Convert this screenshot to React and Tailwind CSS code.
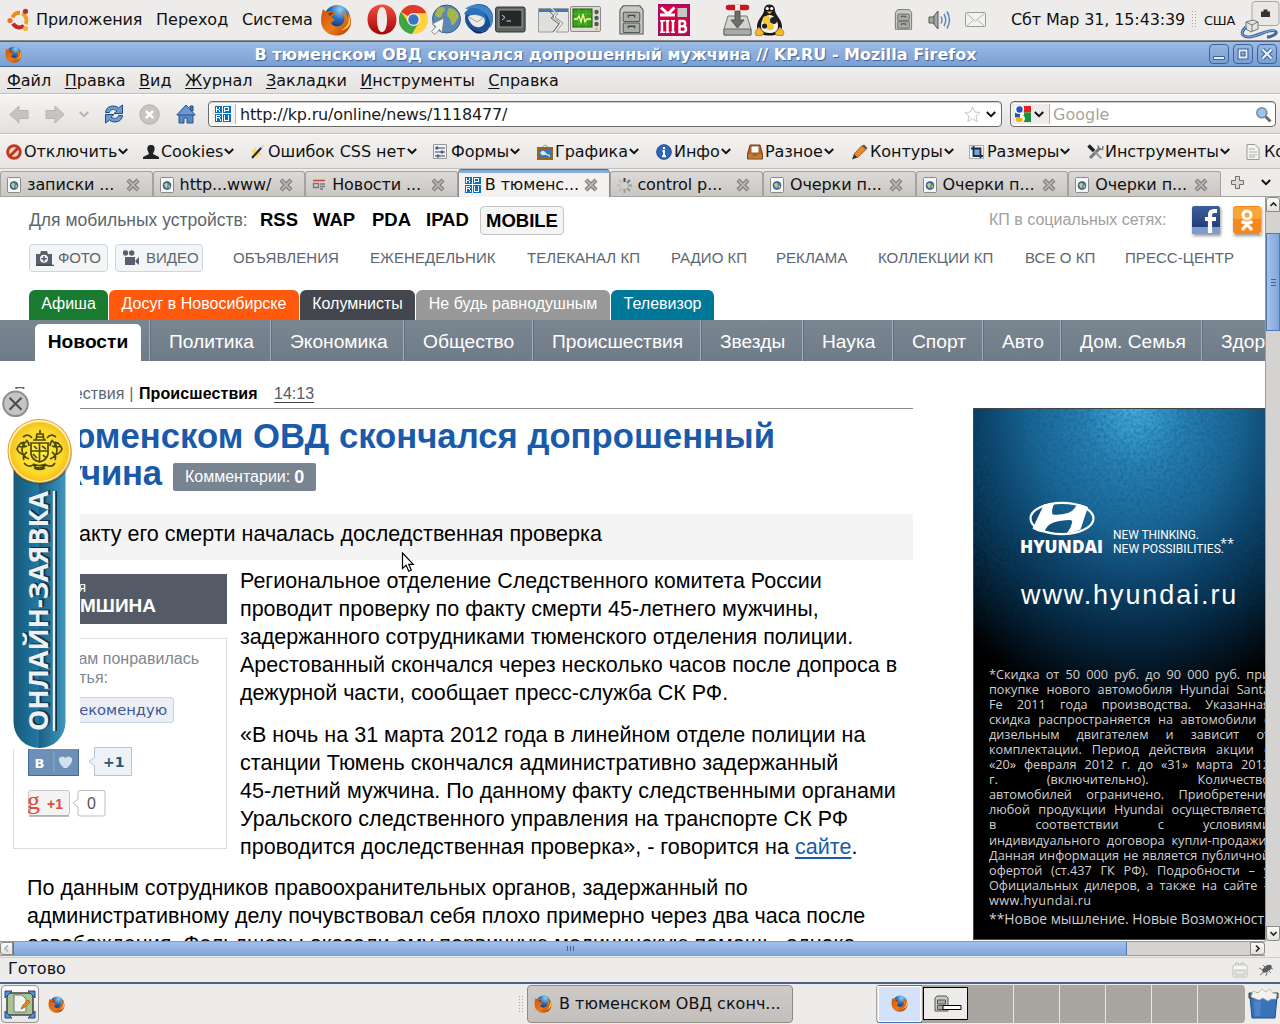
import React from "react";

/* ---------- shared icons ---------- */

const Firefox = ({ s = 32, className = "" }) => (
  <svg width={s} height={s} viewBox="0 0 32 32" className={`shrink-0 ${className}`}>
    <defs>
      <radialGradient id="ffg" cx="62%" cy="18%" r="75%">
        <stop offset="0" stopColor="#8fd3f5" />
        <stop offset=".5" stopColor="#2b6db8" />
        <stop offset="1" stopColor="#142d6b" />
      </radialGradient>
      <linearGradient id="ffo" x1="0" y1="0" x2="1" y2="1">
        <stop offset="0" stopColor="#c9520f" />
        <stop offset=".55" stopColor="#ee7a16" />
        <stop offset="1" stopColor="#a8380a" />
      </linearGradient>
    </defs>
    <circle cx="17" cy="14" r="13" fill="url(#ffg)" />
    <path d="M3 5c1.500 2 3 2.500 5 2.500 3-.5 6 0 7 1 1 1.800-3 2.500-3.500 4.500.5 1.500 3 1.500 3 3-1 2-2.800 1.500-3.500 3 2 4 7.500 4.500 11 1.500 4-4 3-9-1-14 5 2 6.500 5 7 8 .5-1.500.5-4-.5-6.500C31.500 13 32 18 30 23c-3 6.500-9 9-14.500 8.500C7 30.800 1 25 1 16c0-4 1-8 2-11z" fill="url(#ffo)" />
    <path d="M28.500 11c1 5 0 12-8 15.500 7-1 9.500-5 10-9z" fill="#fbd04a" />
    <path d="M8.500 9.500c1.500-.8 3-.8 5-.2-1 .8-3 1.500-4 3z" fill="#7a2c0a" />
  </svg>
);

const Chevron = ({ color = "#111", className = "" }) => (
  <svg width="10" height="7" viewBox="0 0 10 7" className={`shrink-0 ${className}`}>
    <path d="M.8 1 5 5.200 9.200 1" fill="none" stroke={color} strokeWidth="2" />
  </svg>
);

const CloseX = () => (
  <svg width="14" height="14" viewBox="0 0 14 14" className="shrink-0">
    <path d="M2 2 12 12M12 2 2 12" stroke="#7d7b78" strokeWidth="4.200" />
    <path d="M2.500 2.500 11.500 11.500M11.500 2.500 2.500 11.500" stroke="#b8b5b2" strokeWidth="1.800" />
  </svg>
);

const KpIcon = () => (
  <svg width="16" height="16" viewBox="0 0 16 16" className="shrink-0" shapeRendering="crispEdges">
    <rect width="16" height="16" fill="#0a70b8" />
    <path d="M7 0h1v16h-1zM0 7h16v1H0zM15 1h0v14h0z" fill="#fff" />
    <path d="M1 1h1v5H1zM2 3h2v1H2zM4 1h1v2H4zM4 4h1v2H4z" fill="#fff" />
    <path d="M9 1h1v5H9zM10 1h4v1h-4zM13 2h1v2h-1zM10 4h4v1h-4z" fill="#fff" />
    <path d="M1 9h1v6H1zM2 9h3v1H2zM5 10h1v1H5zM2 11h3v1H2zM4 12h1v1H4zM5 13h1v2H5z" fill="#fff" />
    <path d="M9 9h1v6H9zM13 9h1v6h-1zM10 14h3v1h-3z" fill="#fff" />
  </svg>
);

const GlobePage = () => (
  <svg width="14" height="16" viewBox="0 0 14 16" className="shrink-0">
    <rect x=".5" y=".5" width="13" height="15" rx="1" fill="#f6f6f4" stroke="#8a8a86" />
    <circle cx="7" cy="8.500" r="3.900" fill="#4a7ab0" stroke="#2b4d78" strokeWidth=".8" />
    <path d="M4.200 7.500c1-2 3-2 3.500-.5s-1 2-.5 3-1.500 1.500-2 0zM8.500 8.500c1-.5 2 0 1.500 1.500s-1.500 1-1.500 0z" fill="#c3d26a" />
  </svg>
);

const Cabinet = ({ w, h }) => (
  <svg width={w} height={h} viewBox="0 0 24 29" className="shrink-0">
    <path d="M4 .8h16l3.200 4V28H.8V4.800z" fill="#c9cac6" stroke="#555753" />
    <rect x="4" y="7" width="16" height="9" rx="1" fill="#a9aba5" stroke="#555753" />
    <rect x="4" y="17.500" width="16" height="9" rx="1" fill="#a9aba5" stroke="#555753" />
    <path d="M9 12v-2h6v2M9 22.500v-2h6v2" fill="none" stroke="#444" strokeWidth="1.300" />
  </svg>
);

/* ---------- desktop top panel ---------- */

const TopPanel = () => (
  <div className="flex h-10 items-center bg-[#edeceb] pl-[7px] pb-px">
    <svg width="23" height="24" viewBox="0 0 23 24">
      <g fill="none" strokeWidth="4">
        <path d="M5.500 9.500A7.300 7.300 0 0 1 13 4.800" stroke="#f28a1c" />
        <path d="M15 5.500A7.300 7.300 0 0 1 18.500 16" stroke="#f0a029" />
        <path d="M17 17.800A7.300 7.300 0 0 1 6 15.500" stroke="#c22b2b" />
      </g>
      <circle cx="3" cy="12.500" r="2.600" fill="#e8702a" />
      <circle cx="18.500" cy="3.300" r="2.600" fill="#b92b3b" />
      <circle cx="18.500" cy="20.500" r="2.600" fill="#f3b23c" />
    </svg>
    <span className="ml-1.5 w-[120px] tracking-[-0.1px]">Приложения</span>
    <span className="w-[86px]">Переход</span>
    <span className="w-[78px] tracking-[-0.1px]">Система</span>
    <Firefox s={32} />
    <svg width="30" height="31" viewBox="0 0 30 31" className="ml-[15px]">
      <defs><linearGradient id="op" x1="0" y1="0" x2="0" y2="1"><stop offset="0" stopColor="#f4503f" /><stop offset="1" stopColor="#a3040a" /></linearGradient></defs>
      <path fillRule="evenodd" d="M15 .5C23.500.5 29.500 7 29.500 15.500S23.500 30.500 15 30.500.5 24 .5 15.500 6.500.5 15 .5zM15 3c-3.500 0-5 6-5 12.500S11.500 28 15 28s5-6 5-12.500S18.500 3 15 3z" fill="url(#op)" />
    </svg>
    <svg width="29" height="29" viewBox="0 0 28 28" className="ml-0.5">
      <circle cx="14" cy="14" r="14" fill="#ffd23f" />
      <path d="M14 14 2 6.500A14 14 0 0 1 26.500 8H14z" fill="#dd3b2b" />
      <path d="M2 6.500A14 14 0 0 0 12.500 28L19 17 9 17z" fill="#3da542" />
      <circle cx="14" cy="14" r="6.300" fill="#f4f4f4" />
      <circle cx="14" cy="14" r="5" fill="#3a76c4" />
    </svg>
    <svg width="31" height="32" viewBox="0 0 31 32" className="ml-[3px]">
      <circle cx="15.500" cy="15" r="14" fill="#5b87b8" stroke="#385f8d" />
      <path d="M6 5c4-3 7-2 8 0s-3 3-3 6-4 4-7 0zM18 4c5 0 9 4 10 9-3 3-4 8-7 8-2-2 0-5-3-7s-2-8 0-10z" fill="#a3b64c" />
      <path d="M13 14 1 20l4 2.500-4.500 5 3.500 3 4.500-5L11 29z" fill="#f5f5f5" stroke="#777" strokeWidth=".8" />
    </svg>
    <svg width="31" height="31" viewBox="0 0 31 31" className="ml-px">
      <circle cx="16" cy="14" r="14" fill="#1e4f96" />
      <path d="M2 5C8-1 20-1 26 5c5 6 5 14 1 19 1-7-2-14-9-17-6-2-11-2-16-2z" fill="#3d86c9" />
      <path d="M1 10C6 1 18 3 22 11c2 5 1 7-2 10-5 2-11 1-14-4C4 15 5 12 6 11z" fill="#2e70b8" />
      <path d="M5 13c4-4 12-2 16 1 2 4 0 8-4 9-5 1-10-2-12-10z" fill="#eceae4" />
      <path d="M6 13l8 5 6-4" fill="none" stroke="#a9a59c" />
      <path d="M7 23c5 6 14 6 19 1-3 6-15 9-19-1z" fill="#0d2a5c" />
    </svg>
    <svg width="31" height="28" viewBox="0 0 31 28" className="ml-[1px]">
      <rect x=".6" y="1" width="29.500" height="25" rx="2" fill="#61645f" stroke="#2e3436" />
      <rect x="4" y="4" width="23" height="17" fill="#23282b" stroke="#9a9c98" />
      <path d="M7 9l3 2.500L7 14M11.500 15H16" stroke="#ddd" fill="none" />
    </svg>
    <svg width="31" height="26" viewBox="0 0 31 26" className="ml-3">
      <path d="M.5 1.500H13l5 5-4 3 8 6-7 9.500H.5z" fill="#dfe0de" stroke="#9a9c98" />
      <path d="M15 1.500h15.500V25H18l7-9-8-6 3-3z" fill="#e7e8e6" stroke="#9a9c98" />
      <path d="M1 2h12l3 3H1zM15.500 2H30v3H18.500z" fill="#4477b5" />
      <path d="M11 4l5 5-3 2 8 6-6 8" fill="none" stroke="#666" />
    </svg>
    <svg width="31" height="27" viewBox="0 0 31 27" className="ml-px">
      <rect x=".5" y=".5" width="30" height="25" rx="1.500" fill="#dcdcd6" stroke="#888a85" />
      <rect x="3" y="3" width="19" height="18" fill="#37a21a" stroke="#20560f" />
      <path d="M3 8h19M3 14h19M9 3v18M16 3v18" stroke="#5cc43a" strokeWidth=".6" />
      <path d="M4 13h3l2-3 2 6 2-8 2 8 2-3h4" fill="none" stroke="#fff9a0" strokeWidth="1.300" />
      <circle cx="26.500" cy="6" r="2.200" fill="#555753" /><circle cx="26.500" cy="12" r="2.200" fill="#555753" /><circle cx="26.500" cy="18" r="2.200" fill="#555753" /><circle cx="26.500" cy="23" r="1.300" fill="#e9b23a" />
    </svg>
    <span className="ml-[18px] flex"><Cabinet w={25} h={30} /></span>
    <svg width="32" height="32" viewBox="0 0 32 32" className="ml-[14px]">
      <rect width="32" height="32" fill="#d0043e" />
      <rect x=".8" y=".8" width="30.400" height="30.400" fill="none" stroke="#7a10a0" strokeWidth="1.600" strokeDasharray="1.500 1.500" />
      <path d="M2 11h15M10 10 3 3.500M10 10l6.500-6.500" stroke="#fff" strokeWidth="3" fill="none" />
      <rect x="19.500" y="4" width="9.500" height="9" fill="#c9c4c6" />
      <path d="M4 16v13M9.500 16v13M15 16v13" stroke="#fff" strokeWidth="2.400" />
      <path d="M2 16.800h5M7.500 16.800h4M13 16.800h4M2 28.200h5M7.500 28.200h4M13 28.200h4" stroke="#fff" strokeWidth="1.600" />
      <path d="M21.500 17v11h4q2.500-.3 2.500-3t-2.500-2.800h-4 3.500q2.200-.3 2.200-2.700T25 17z" fill="none" stroke="#fff" strokeWidth="2.400" />
    </svg>
    <svg width="29" height="32" viewBox="0 0 29 32" className="ml-[33px]">
      <path d="M5 12h19l4 13v6H1v-6z" fill="#d3d4d0" stroke="#777" />
      <path d="M1 25h27v6H1z" fill="#a9aba6" stroke="#666" />
      <path d="M12 7h5v9h4l-6.500 8L8 16h4z" fill="#6b6e69" stroke="#444" strokeWidth=".8" />
      <path d="M5.500 3.500h18" stroke="#c9171c" strokeWidth="5.500" strokeLinecap="round" /><path d="M12 3.500h5" stroke="#eee" strokeWidth="5.500" />
    </svg>
    <svg width="31" height="32" viewBox="0 0 31 32" className="ml-0.5">
      <path d="M15.500.5c4 0 5.500 3 5.500 6 0 4 7 9 7 16s-5 9-12.500 9S3 29.500 3 22.500s7-12 7-16c0-3 1.500-6 5.500-6z" fill="#1b1b1b" />
      <path d="M15.500 11c5 0 8.500 6 8.500 11s-3 7-8.500 7S7 27 7 22s3.500-11 8.500-11z" fill="#f4f2ec" />
      <circle cx="12.500" cy="16" r="4" fill="#f5c92f" /><circle cx="19.500" cy="16.500" r="3.500" fill="#222" /><circle cx="16" cy="22.500" r="3.800" fill="#f5c92f" /><circle cx="10.500" cy="22" r="2.600" fill="#222" />
      <circle cx="13.300" cy="4.500" r="1.600" fill="#fff" /><circle cx="17.700" cy="4.500" r="1.600" fill="#fff" /><path d="M12.500 7.500h6l-3 2.500z" fill="#eeb320" />
      <path d="M1 28l4-5 5 6-2 2.500H2zM30 28l-4-5-5 6 2 2.500h6z" fill="#f0b92a" stroke="#8a6410" strokeWidth=".6" />
    </svg>
    <span className="ml-[109px] flex"><Cabinet w={19} h={21} /></span>
    <svg width="23" height="20" viewBox="0 0 23 20" className="ml-[15px]">
      <path d="M1 7h4l5-6v18l-5-6H1z" fill="#a5a7a2" stroke="#555753" /><path d="M6 6v8" stroke="#555" />
      <path d="M13 6.500q2 3.500 0 7M16 4q3.500 6 0 12M19 1.500q5 8.500 0 17" fill="none" stroke="#5f86b4" strokeWidth="1.500" />
    </svg>
    <svg width="21" height="16" viewBox="0 0 21 16" className="ml-[14px]">
      <rect x=".5" y=".5" width="20" height="14" rx="1" fill="#f2f2f0" stroke="#9c9c98" /><path d="M1.500 1.500 10.500 9l9-7.500M1.500 14l7-6M19.500 14l-7-6" fill="none" stroke="#b5b5b1" />
    </svg>
    <span className="ml-[25px] w-[181px] whitespace-nowrap tracking-[-0.13px]">Сбт Мар 31, 15:43:39</span>
    <svg width="5" height="17" viewBox="0 0 5 17" shapeRendering="crispEdges"><path d="M.5 0v17M3.500 0v17" stroke="#aaa7a4" strokeDasharray="1 2" /></svg>
    <span className="ml-[7px] w-[36px] pt-px text-[13px] leading-none tracking-[-0.3px]">США</span>
    <svg width="40" height="40" viewBox="0 0 40 40" className="mt-px">
      <rect x="12" y="1.500" width="27" height="24" rx="3" fill="#e9e8e4" stroke="#a9a8a4" />
      <path d="M21 17v-5.500h2.500V9.500h4v2H30V17z" fill="#333" />
      <path d="M6 22l7-2 5 2v7l-7 3-5-3z" fill="#e4e4e1" stroke="#777" /><path d="M6 22l6 3 6-3M12 25v6" stroke="#777" fill="none" />
      <path d="M6 27C-2 34 4 39 14 36S31 29 35 31s-3 6-8 6" fill="none" stroke="#3b67a5" strokeWidth="3" />
      <path d="M6 27C-2 34 4 39 14 36S31 29 35 31" fill="none" stroke="#8fb1dc" strokeWidth="1" />
    </svg>
  </div>
);

/* ---------- window title and menus ---------- */

const WinBtn = ({ children, className = "" }) => (
  <span className={`flex h-5 w-5 items-center justify-center rounded-[4px] border border-[#3f6396] bg-gradient-to-b from-[#96b6e1] to-[#7b9fd1] ${className}`}>
    <svg width="16" height="16" viewBox="0 0 16 16">{children}</svg>
  </span>
);

const TitleBar = () => (
  <div className="flex h-[27px] items-center border-t border-[#8a8886] bg-[#edeceb]">
    <div className="flex h-[26px] w-full items-center border-y border-t-[#44638f] border-b-[#46699c] bg-gradient-to-b from-[#9cbbe5] to-[#7a9fd1] pr-[3px] pl-[5px]">
      <Firefox s={17} />
      <span className="flex-1 pt-px text-center font-bold whitespace-nowrap text-white [text-shadow:1px_1px_1px_#3f629a]">В тюменском ОВД скончался допрошенный мужчина // KP.RU - Mozilla Firefox</span>
      <div className="flex gap-1">
        <WinBtn><path d="M2.500 10.500h11v3h-11z" fill="#e6eefa" stroke="#3f6396" /></WinBtn>
        <WinBtn><path d="M4.500 4.500h7v7h-7z" fill="none" stroke="#3f6396" strokeWidth="4" /><path d="M4.500 4.500h7v7h-7z" fill="none" stroke="#e6eefa" strokeWidth="1.800" /></WinBtn>
        <WinBtn><path d="M3.500 3.500 12.500 12.500M12.500 3.500 3.500 12.500" stroke="#3f6396" strokeWidth="4.500" /><path d="M3.500 3.500 12.500 12.500M12.500 3.500 3.500 12.500" stroke="#e6eefa" strokeWidth="2.400" /></WinBtn>
      </div>
    </div>
  </div>
);

const MENUS = ["Файл", "Правка", "Вид", "Журнал", "Закладки", "Инструменты", "Справка"];

const MenuBar = () => (
  <div className="flex h-[27px] items-center gap-[13.5px] border-b border-[#c1bfbc] bg-gradient-to-b from-[#efeeed] to-[#e5e3e1] pt-0.5 pl-[7px]">
    {MENUS.map((m) => (
      <span key={m}><span className="underline decoration-1 underline-offset-2">{m[0]}</span>{m.slice(1)}</span>
    ))}
  </div>
);

const NavBar = () => (
  <div className="flex h-10 items-center border-t border-b border-t-white border-b-[#c1bfbc] bg-gradient-to-b from-[#f5f4f3] to-[#e3e1df] pl-[9px]">
    <svg width="20" height="19" viewBox="0 0 20 19"><path d="M.8 9.500 10 1v4.500h9v8h-9V18z" fill="#c6c4c2" stroke="#b7b5b2" /></svg>
    <svg width="20" height="19" viewBox="0 0 20 19" className="ml-4"><path d="M19.200 9.500 10 1v4.500H1v8h9V18z" fill="#c6c4c2" stroke="#b7b5b2" /></svg>
    <Chevron color="#b5b3b0" className="ml-3.5" />
    <svg width="20" height="20" viewBox="0 0 20 20" className="ml-[15px]">
      <path d="M1.500 8.500C2 1.500 11 .5 14.500 4L18.500 1v8.500h-8.500L13 7C10 4.500 6 5.500 5.500 8.500z" fill="#6d9bd1" stroke="#204a87" />
      <path d="M18.500 11.500c-.5 7-9.500 8-13 4.500L1.500 19v-8.500H10L7 13c3 2.500 7 1.500 7.500-1.500z" fill="#6d9bd1" stroke="#204a87" />
    </svg>
    <svg width="21" height="21" viewBox="0 0 21 21" className="ml-[15px]"><circle cx="10.500" cy="10.500" r="9.700" fill="#c9c4c3" stroke="#b1adab" /><path d="M6.800 6.800 14.200 14.200M14.200 6.800 6.800 14.200" stroke="#fff" strokeWidth="2.500" /></svg>
    <svg width="20" height="20" viewBox="0 0 20 20" className="ml-4"><path d="M14 2h3v5h-3z" fill="#4d7ab3" stroke="#204a87" /><path d="M3 10v9h5v-5h3v5h6v-9" fill="#5a8ac6" stroke="#274f8a" /><path d="M10 1 .8 11h18.400z" fill="#6a98d2" stroke="#274f8a" /></svg>
    <div className="ml-3 flex h-[26px] w-[794px] items-center rounded-[4px] border border-[#6b6966] bg-white shadow-[inset_0_1px_1px_#ccc]">
      <span className="flex h-[20px] w-[25px] items-center border-r border-[#b8b5b2] bg-[#f3f2f1] ml-0.5 pl-1"><KpIcon /></span>
      <span className="ml-1 flex-1 pt-0.5 tracking-[-0.18px] text-[#1a1a1a]">http://kp.ru/online/news/1118477/</span>
      <svg width="17" height="17" viewBox="0 0 17 17" className="mr-[5px]"><path d="M8.500 1l2.200 5 5.300.5-4 3.600 1.200 5.400-4.700-2.900-4.700 2.900L5 10.100l-4-3.600L6.300 6z" fill="#fdfdfd" stroke="#c9c7c5" /></svg>
      <Chevron className="mr-[5px]" />
    </div>
    <div className="ml-2 flex h-[26px] w-[266px] items-center rounded-[4px] border border-[#6b6966] bg-white shadow-[inset_0_1px_1px_#ccc]">
      <span className="ml-px flex h-[20px] w-[38px] items-center border-r border-[#b8b5b2] bg-[#edeceb] pl-[3px]">
        <svg width="16" height="16" viewBox="0 0 16 16"><rect width="16" height="16" fill="#fff" /><path d="M8.500 0H16v6.500H8.500q1.500-3 0-6.500z" fill="#e8221b" /><path d="M9 6.500h7V16H8.500q3-3.500 0-6.500 1-1 .5-3z" fill="#16943c" /><circle cx="4.500" cy="3.500" r="3.200" fill="#2454c4" /><path d="M0 6.500q2 1.500 5 1.500v3.500H0z" fill="#2454c4" /><ellipse cx="4.200" cy="13.700" rx="3.700" ry="2.200" fill="#f0b416" /></svg>
        <Chevron className="ml-[3px]" />
      </span>
      <span className="ml-[3px] flex-1 pt-0.5 text-[#aaa49d]">Google</span>
      <svg width="17" height="17" viewBox="0 0 17 17" className="mr-[3px]"><path d="M10.500 10.500 15.500 15.500" stroke="#6b6d69" strokeWidth="3" /><circle cx="6.800" cy="6.800" r="5" fill="#9cc3ee" stroke="#7f8a99" strokeWidth="1.600" /></svg>
    </div>
  </div>
);

/* ---------- developer toolbar ---------- */

const DEV = [
  ["Отключить", "w-[137px]", <svg width="16" height="16" viewBox="0 0 16 16"><circle cx="8" cy="8" r="6.300" fill="#f2d5d0" stroke="#c4371f" strokeWidth="3" /><path d="M4 12 12 4" stroke="#c4371f" strokeWidth="3" /></svg>],
  ["Cookies", "w-[107px]", <svg width="16" height="16" viewBox="0 0 16 16"><path d="M8 1c3 0 4 2 3.500 5C11 8 10 9 10 10l6 3v2H0v-2l6-3c0-1-1-2-1.500-4C4 3 5 1 8 1z" fill="#222" /></svg>],
  ["Ошибок CSS нет", "w-[183px]", <svg width="16" height="16" viewBox="0 0 16 16"><path d="M5 3l2 3 3-1-1 3 3 3-4 0-1 4-2-3-4 1 2-4-2-3 3 0z" fill="#f5d96b" /><path d="M2 14 12 3" stroke="#222" strokeWidth="2" /><path d="M11 4l3-3" stroke="#ddd" strokeWidth="2" /></svg>],
  ["Формы", "w-[104px]", <svg width="15" height="15" viewBox="0 0 15 15"><path d="M.5.5h13v14H.5z" fill="#f3f3f1" stroke="#999" /><path d="M2 4h10M2 8h10M2 12h10" stroke="#444" strokeWidth="1.200" /><path d="M4 2.500v3M9 6.500v3M5 10.500v3" stroke="#3465a4" strokeWidth="2.500" /></svg>],
  ["Графика", "w-[119px]", <svg width="16" height="16" viewBox="0 0 16 16"><path d="M4 4l4-3 4 3" stroke="#999" fill="none" /><rect x="1" y="4" width="14" height="11" fill="#3a77b8" stroke="#9c6415" strokeWidth="2" /><path d="M3 9q3-4 5-1t5 3v2q-4-3-6-2T3 9z" fill="#dbe9f6" /></svg>],
  ["Инфо", "w-[91px]", <svg width="16" height="16" viewBox="0 0 16 16"><circle cx="8" cy="8" r="7.300" fill="#2f66b8" stroke="#1f4789" /><path d="M8 3v2.200M6.500 7H8v5M6 12.300h4" stroke="#fff" strokeWidth="1.900" fill="none" /></svg>],
  ["Разное", "w-[105px]", <svg width="16" height="16" viewBox="0 0 16 16"><path d="M3 1h10l2.500 9v5H.5v-5z" fill="#a8622a" stroke="#7a4013" /><path d="M4.500 2.500h7v6h-7z" fill="#fafafa" /><path d="M1 10h4l1 2h4l1-2h4v4.500H1z" fill="#c07a3a" /></svg>],
  ["Контуры", "w-[117px]", <svg width="16" height="16" viewBox="0 0 16 16"><path d="M0 15.500 2 10l3.500 3.500z" fill="#333" /><path d="M2 10 10 1.500l4 4-8.500 8z" fill="#e8872b" stroke="#93500f" strokeWidth=".8" /><path d="M10 2l2-1.500L15.500 4 14 5.500z" fill="#555" /></svg>],
  ["Размеры", "w-[118px]", <svg width="16" height="16" viewBox="0 0 16 16"><rect x=".5" y="1.500" width="14" height="13" fill="#f3f3f3" stroke="#aaa" /><rect x="4" y="5" width="8" height="7" fill="#7aa3d8" /><path d="M4.500 2v10H14M2 4.500h9.500V14" fill="none" stroke="#1b2e4a" strokeWidth="1.800" /></svg>],
  ["Инструменты", "w-[159px]", <svg width="17" height="16" viewBox="0 0 17 16"><path d="M3 14 13 4" stroke="#777" strokeWidth="3" /><path d="M11 1.500 12 5l3.500.5L16 2" fill="none" stroke="#777" strokeWidth="1.500" /><path d="M1.500 1.500 7 7" stroke="#222" strokeWidth="3.500" /><path d="M7 7 14.500 14.500" stroke="#999" strokeWidth="1.800" /></svg>],
  ["Ко", "w-[60px]", <svg width="15" height="16" viewBox="0 0 15 16"><path d="M1 .5h8l4 4v11H1z" fill="#f4f4f2" stroke="#999" /><path d="M3 5h6M3 8h8M3 11h8M3 13h6" stroke="#aaa" /></svg>],
];

const DevBar = () => (
  <div className="flex h-[35px] items-center overflow-hidden border-t border-b border-t-white border-b-[#c1bfbc] bg-gradient-to-b from-[#f3f2f1] to-[#e6e4e2] pl-1.5">
    {DEV.map(([t, w, icon]) => (
      <div key={t} className={`flex shrink-0 items-center ${w}`}>
        <span className="flex w-[18px]">{icon}</span>
        <span className="tracking-[-0.05px] whitespace-nowrap">{t}</span>
        {t !== "Ко" && <Chevron className="ml-px" />}
      </div>
    ))}
  </div>
);

/* ---------- tabs ---------- */

const NewsIcon = () => (
  <svg width="14" height="12" viewBox="0 0 14 12"><path d="M1 1.500h12" stroke="#d0412f" strokeWidth="1.500" /><path d="M1.500 4.500h5v4h-5zM8 5h5M8 7.500h5M8 10h3" fill="none" stroke="#777" strokeWidth="1.300" /></svg>
);
const Spinner = () => (
  <svg width="15" height="15" viewBox="0 0 15 15"><g strokeWidth="2" stroke="#bbb"><path d="M0 7.500h4M2 2l3 3M2 13l3-3" /><path d="M7.500 0v4" stroke="#444" /><path d="M13 2l-3 3" stroke="#777" /><path d="M15 7.500h-4M13 13l-3-3M7.500 15v-4" stroke="#999" /></g></svg>
);

const TABS = [
  ["записки ...", <GlobePage />], ["http...www/", <GlobePage />], ["Новости ...", <NewsIcon />], ["В тюменс...", <KpIcon />, true],
  ["control p...", <Spinner />], ["Очерки п...", <GlobePage />], ["Очерки п...", <GlobePage />], ["Очерки п...", <GlobePage />],
];

const TabBar = () => (
  <div className="flex h-7 items-end border-b border-[#a5a29e] bg-[#edeceb]">
    {TABS.map(([t, icon, active], i) => (
      <div key={i} className={active
        ? "flex h-[28px] w-[152.600px] items-center rounded-t-[4px] border border-b-0 border-[#8c8a87] border-t-[#4a6da5] bg-gradient-to-b from-[#86abdf] from-[11%] to-[#f3f2f1] to-[12%] pt-0.5 pl-[6px] -mb-px"
        : "flex h-[25px] w-[152.600px] items-center rounded-t-[3px] border border-b-0 border-[#a5a29e] bg-gradient-to-b from-[#dcdad8] to-[#c9c6c3] pt-0.5 pl-[6px]"}>
        <span className="flex w-[20px]">{icon}</span>
        <span className="w-[99px] tracking-[-0.1px] whitespace-nowrap">{t}</span>
        <CloseX />
      </div>
    ))}
    <svg width="13" height="13" viewBox="0 0 13 13" className="mb-[7px] ml-2.5"><path d="M4.500.5h4v4h4v4h-4v4h-4v-4h-4v-4h4z" fill="#dcdad8" stroke="#6f6d6a" /></svg>
    <Chevron className="mb-2.5 ml-[17px]" />
  </div>
);

/* ---------- site header ---------- */

const LINKS = [["ОБЪЯВЛЕНИЯ", "w-[137px]"], ["ЕЖЕНЕДЕЛЬНИК", "w-[157px]"], ["ТЕЛЕКАНАЛ КП", "w-[144px]"], ["РАДИО КП", "w-[105px]"], ["РЕКЛАМА", "w-[102px]"], ["КОЛЛЕКЦИИ КП", "w-[147px]"], ["ВСЕ О КП", "w-[100px]"], ["ПРЕСС-ЦЕНТР", "w-[120px]"]];
const COLOR_TABS = [["Афиша", "w-[79px] bg-[#187b30]"], ["Досуг в Новосибирске", "w-[190px] bg-[#ff590e]"], ["Колумнисты", "w-[115px] bg-[#43464d]"], ["Не будь равнодушным", "w-[194px] bg-[#999999]"], ["Телевизор", "w-[103px] bg-[#007899]"]];
const SECTIONS = [["Политика", "w-[121px]"], ["Экономика", "w-[133px]"], ["Общество", "w-[129px]"], ["Происшествия", "w-[168px]"], ["Звезды", "w-[102px]"], ["Наука", "w-[90px]"], ["Спорт", "w-[90px]"], ["Авто", "w-[78px]"], ["Дом. Семья", "w-[141px]"], ["Здоровье", "w-[120px]"]];

const SiteHeader = () => (
  <header className="h-[164px]">
    <div className="flex h-[45px] items-center pl-[29px]">
      <span className="w-[231px] text-[17.500px] whitespace-nowrap text-[#5b6670]">Для мобильных устройств:</span>
      <div className="flex text-[18.500px] font-bold">
        <span className="w-[53px]">RSS</span>
        <span className="w-[59px]">WAP</span>
        <span className="w-[54px]">PDA</span>
        <span className="w-[54px]">IPAD</span>
      </div>
      <span className="mt-[2px] flex h-[29px] w-[84px] items-center justify-center rounded-[4px] border border-[#c4c4c4] bg-[#f4f4f4] text-[18.500px] font-bold">MOBILE</span>
      <span className="ml-[425px] w-[203px] whitespace-nowrap text-[#a0a0a0]">КП в социальных сетях:</span>
      <svg width="28" height="28" viewBox="0 0 28 28" className="shadow-[1px_2px_3px_#999]">
        <defs><linearGradient id="fb" x1="0" y1="0" x2="0" y2="1"><stop offset="0" stopColor="#3c5f9f" /><stop offset=".7" stopColor="#263f7a" /></linearGradient></defs>
        <rect width="28" height="28" rx="2" fill="url(#fb)" /><path d="M0 21h28v5q0 2-2 2H2q-2 0-2-2z" fill="#7c9bcf" />
        <path d="M18 27V9q0-4 4-4h3M13 13h11" fill="none" stroke="#fff" strokeWidth="4.200" />
      </svg>
      <svg width="28" height="28" viewBox="0 0 28 28" className="ml-[13px] shadow-[1px_2px_3px_#999]">
        <rect width="28" height="28" rx="3" fill="#f7871c" /><rect y="1" width="28" height="12" rx="3" fill="#fba539" />
        <circle cx="14" cy="9" r="4" fill="none" stroke="#fff" strokeWidth="3" />
        <path d="M8.500 15.500q5.500 3 11 0M9 24l5-5.500 5 5.500" fill="none" stroke="#fff" strokeWidth="3.200" />
      </svg>
    </div>
    <div className="mt-0.5 flex h-[28px] items-center pl-[29px] text-[15px] text-[#5b6670]">
      <span className="flex h-[28px] w-[79px] items-center rounded-[4px] border border-[#ccd6e0] bg-[#f4f5f6] pl-1.5">
        <svg width="18" height="15" viewBox="0 0 18 15"><path d="M0 3h4l1-3h6l1 3h4v11H0z" fill="#57606b" /><circle cx="8" cy="7.800" r="4" fill="#f4f5f6" /><path d="M8 5v5.600M5.200 7.800h5.600" stroke="#57606b" strokeWidth="1.600" /><path d="M0 14.300h18" stroke="#222" /></svg>
        <span className="ml-1 tracking-[-0.1px]">ФОТО</span>
      </span>
      <span className="ml-[7px] flex h-[28px] w-[88px] items-center rounded-[4px] border border-[#ccd6e0] bg-[#f4f5f6] pl-[7px]">
        <svg width="17" height="16" viewBox="0 0 17 16"><g fill="#57606b"><circle cx="2.500" cy="3" r="2.700" /><circle cx="8.700" cy="3" r="2.700" /><path d="M2 7h10v8H2zM12.500 10.500 16 7v8l-3.500-3z" /></g></svg>
        <span className="ml-1.5">ВИДЕО</span>
      </span>
      <div className="ml-[30px] flex tracking-[0.05px]">
        {LINKS.map(([t, w]) => <span key={t} className={`whitespace-nowrap ${w}`}>{t}</span>)}
      </div>
    </div>
    <div className="mt-[18px] flex h-[30px] gap-px pl-[29px] text-white">
      {COLOR_TABS.map(([t, c]) => <span key={t} className={`flex items-center justify-center rounded-t-[6px] pb-0.5 whitespace-nowrap ${c}`}>{t}</span>)}
    </div>
    <nav className="flex h-[41px] items-end overflow-hidden bg-gradient-to-b from-[#7a8690] to-[#6f7b87] pl-[35px] text-[19.200px] text-white">
      <span className="mr-2 flex h-[37px] w-[106px] shrink-0 items-center justify-center rounded-t-[5px] bg-white pb-0.5 font-bold text-black">Новости</span>
      {SECTIONS.map(([t, w]) => (
        <span key={t} className={`flex h-[41px] shrink-0 items-center border-l border-[#9fb0c0] whitespace-nowrap ${w}`}>
          <span className="flex h-full items-center border-l border-[#5d6f82] pl-[18px] pt-0.5">{t}</span>
        </span>
      ))}
    </nav>
  </header>
);

/* ---------- article ---------- */

const P1 = ["Региональное отделение Следственного комитета России", "проводит проверку по факту смерти 45-летнего мужчины,", "задержанного сотрудниками тюменского отделения полиции.", "Арестованный скончался через несколько часов после допроса в", "дежурной части, сообщает пресс-служба СК РФ."];
const P2 = ["«В ночь на 31 марта 2012 года в линейном отделе полиции на", "станции Тюмень скончался административно задержанный", "45-летний мужчина. По данному факту следственными органами", "Уральского следственного управления на транспорте СК РФ"];
const P3 = ["По данным сотрудников правоохранительных органов, задержанный по", "административному делу почувствовал себя плохо примерно через два часа после", "освобождения. Фельдшеры оказали ему первичную медицинскую помощь, однако"];

const Lines = ({ items }) => items.map((l) => <span key={l} className="block whitespace-nowrap">{l}</span>);

const SocialBox = () => (
  <div className="mt-[14px] h-[211px] w-[214px] border border-[#dddddd] pt-[10px] pl-[14px] text-[#80878f]">
    <p className="w-[171px] text-right leading-[19px] whitespace-nowrap">Если вам понравилась</p>
    <p className="w-[80px] text-right leading-[19px]">статья:</p>
    <div className="mt-[10px] flex h-[26px] w-[146px] items-center justify-end rounded-[3px] border border-[#cad4e7] bg-[#eceef5] pr-1.5 font-['DejaVu_Sans'] text-[14.700px] text-[#3b5998]">Рекомендую</div>
    <div className="mt-[24px] flex items-center">
      <svg width="51" height="28" viewBox="0 0 51 28"><rect width="51" height="28" rx="2" fill="#6d8fb8" /><path d="M.5 0v27.500h50V0" fill="none" stroke="#44699b" /><path d="M26 4v20" stroke="#8fabcc" /><path d="M31 10q4-3 6.500 0 2.500-3 6.500 0 1 5-5 10h-3Q30 15 31 10z" fill="#d3e0ee" /><text x="6.500" y="19.500" fontSize="13" fontWeight="bold" fill="#fff" fontFamily="DejaVu Sans">В</text></svg>
      <svg width="45" height="30" viewBox="0 0 45 30" className="ml-[9px]"><path d="M6.500.5h37v28h-37v-10L1 14.500l5.500-4z" fill="#ecf2f7" stroke="#b3c5d6" /><text x="15" y="19.500" fontSize="14" fontWeight="bold" fill="#2b587a" fontFamily="DejaVu Sans">+1</text></svg>
    </div>
    <div className="mt-[13px] flex">
      <svg width="42" height="28" viewBox="0 0 42 28"><rect x=".5" y=".5" width="41" height="25" rx="2.500" fill="#f3f3f3" stroke="#c6c6c6" /><path d="M1 26h40" stroke="#a9a9a9" strokeWidth="1.500" /><text x="-1" y="19" fontSize="26" fill="#dd4b39" fontFamily="Liberation Serif">g</text><text x="19" y="18.500" fontSize="14" fontWeight="bold" fill="#dd4b39" fontFamily="Liberation Sans">+1</text></svg>
      <svg width="36" height="27" viewBox="0 0 36 27"><path d="M10 .5h23q2 0 2 2v22q0 1.500-2 1.500H10q-2 0-2-2v-7L3 13l5-4V3q0-2.500 2-2.500z" fill="#fff" stroke="#bdbdbd" /><text x="17" y="18.800" fontSize="16" fill="#555" fontFamily="Liberation Sans">0</text></svg>
    </div>
  </div>
);

const Article = () => (
  <article className="w-[913px] shrink-0">
    <div className="ml-[14px] flex h-[48px] items-end border-b border-[#8c8c8c] pb-[4px] leading-[21px]">
      <span className="w-[125px] whitespace-nowrap tracking-[0.1px] text-[#5b6670]">Происшествия |</span>
      <span className="w-[135px] font-bold tracking-[0.1px]">Происшествия</span>
      <span className="leading-[17px] mb-[1px] border-b border-[#444] text-[#555b66]">14:13</span>
    </div>
    <h1 className="mt-[9px] pl-[14px] text-[34.700px] leading-[36px] font-bold text-[#195baa]">
      <span className="block whitespace-nowrap">В тюменском ОВД скончался допрошенный</span>
      <span className="flex items-center">
        <span className="w-[159px] -translate-x-[1px] tracking-[-0.2px]">мужчина</span>
        <span className="mt-[9px] flex h-[28px] w-[143px] items-center rounded-[2px] bg-[#788490] pl-3 text-[16px] font-normal whitespace-nowrap text-white">Комментарии:<b className="ml-1 text-[18px]">0</b></span>
      </span>
    </h1>
    <p className="mt-[23px] ml-7 h-[46px] bg-[#f4f4f4] leading-[40px] text-[21.500px] whitespace-nowrap">По факту его смерти началась доследственная проверка</p>
    <div className="flex">
      <aside className="w-[227px] pt-[14px] pl-[13px]">
        <div className="h-[50px] bg-[#555b66] pt-[5px] text-white">
          <div className="w-[73px] text-right text-[14px] leading-[16px]">Мария</div>
          <div className="w-[143px] text-right text-[19px] leading-[21px] font-bold">ТИМШИНА</div>
        </div>
        <SocialBox />
      </aside>
      <div className="ml-[13px] pt-[7px] text-[21.500px] leading-[28px]">
        <p><Lines items={P1} /></p>
        <p className="mt-[14px] tracking-[0.03px]"><Lines items={P2} /><span className="block whitespace-nowrap">проводится доследственная проверка», - говорится на <span className="text-[#195baa] underline underline-offset-3">сайте</span>.</span></p>
      </div>
    </div>
    <p className="mt-[13px] pl-[27px] text-[21.500px] leading-[28px]"><Lines items={P3} /></p>
  </article>
);

const LEGAL = ["*Скидка от 50 000 руб. до 90 000 руб. при", "покупке нового автомобиля Hyundai Santa", "Fe 2011 года производства. Указанная", "скидка распространяется на автомобили с", "дизельным двигателем и зависит от", "комплектации. Период действия акции с", "«20» февраля 2012 г. до «31» марта 2012", "г. (включительно). Количество", "автомобилей ограничено. Приобретение", "любой продукции Hyundai осуществляется", "в соответствии с условиями", "индивидуального договора купли-продажи.", "Данная информация не является публичной", "офертой (ст.437 ГК РФ). Подробности – у", "Официальных дилеров, а также на сайте –"];

const HyundaiAd = () => (
  <div className="relative mt-[47px] ml-[60px] h-[532px] w-[300px] shrink-0 border border-[#444] bg-[radial-gradient(ellipse_235px_285px_at_160px_-5px,#48b0e2_0%,#2a80b4_22%,#1c6596_44%,#0f446c_62%,#062740_82%,#000000_108%)] bg-black font-['Open_Sans'] text-white">
    <svg className="absolute inset-0" width="290" height="230"><defs><filter id="grain"><feTurbulence type="fractalNoise" baseFrequency=".3" numOctaves="2" /><feColorMatrix values="0 0 0 0 0  0 0 0 0 0.1  0 0 0 0 0.2  0.900 0 0 0 -0.320" /></filter><linearGradient id="fade" x1="0" y1="0" x2="0" y2="1"><stop offset=".4" stopColor="#fff" /><stop offset="1" stopColor="#000" /></linearGradient><mask id="gm"><rect width="300" height="230" fill="url(#fade)" /></mask></defs><g mask="url(#gm)"><rect width="300" height="230" filter="url(#grain)" /></g></svg>
    <svg className="relative mt-[92px] ml-[46px] block" width="225" height="56" viewBox="0 0 225 56">
      <ellipse cx="42" cy="17.500" rx="31.500" ry="15.700" fill="none" stroke="#fff" strokeWidth="2.200" />
      <path d="M24 3.500 12.500 27.500q5 3.500 11.500 4 3-8 9.500-10 7-2.500 16.500-2.500 3 0 2 3-1 5-5 10 7-.5 13.500-3.500L68 6q-5-2.500-11-3.500-2 7-9 9.500-8 2.500-15.500 1.500Q31 7 35 2q-6 0-11 1.500z" fill="#fff" />
      <text x="0" y="51.500" fontSize="17" fontWeight="800" fill="#fff" textLength="83" lengthAdjust="spacingAndGlyphs" fontFamily="Open Sans">HYUNDAI</text>
      <text x="93" y="38" fontSize="12.500" fill="#fff" textLength="86" lengthAdjust="spacingAndGlyphs" fontFamily="Roboto">NEW THINKING.</text>
      <text x="93" y="52" fontSize="12.500" fill="#fff" textLength="111" lengthAdjust="spacingAndGlyphs" fontFamily="Roboto">NEW POSSIBILITIES.</text>
      <text x="200 207" y="47" fontSize="13" fill="#fff" fontFamily="Open Sans">**</text>
    </svg>
    <div className="relative mt-[18px] ml-[47px] font-['Liberation_Sans'] text-[27px] leading-[40px] tracking-[1.900px]">www.hyundai.ru</div>
    <div className="relative mt-[52px] ml-[15px] w-[281px] text-[12.700px] leading-[15.050px] text-[#d0d0d0]">
      {LEGAL.map((l) => <div key={l} className="whitespace-nowrap [text-align-last:justify]">{l}</div>)}
      <div className="tracking-[0.4px]">www.hyundai.ru</div>
      <div className="mt-[3px] text-[13.900px] leading-[16px] whitespace-nowrap">**Новое мышление. Новые Возможности</div>
    </div>
  </div>
);

/* ---------- floating side banner ---------- */

const Banner = () => (
  <div className="absolute top-[192px] left-0 h-[360px] w-20 bg-white">
    <svg width="80" height="364" viewBox="0 0 80 364" className="absolute -top-1 left-0">
      <defs>
        <linearGradient id="pill"><stop offset="0" stopColor="#165a78" /><stop offset=".48" stopColor="#2377a3" /><stop offset=".5" stopColor="#1b6285" /><stop offset="1" stopColor="#3f97bf" /></linearGradient>
        <radialGradient id="coin"><stop offset="0" stopColor="#fff04a" /><stop offset=".75" stopColor="#fbd92a" /><stop offset="1" stopColor="#f5c020" /></radialGradient>
      </defs>
      <path d="M13.500 64h52v273a26 26 0 0 1-52 0z" fill="url(#pill)" />
      <circle cx="40" cy="68" r="32" fill="#333" opacity=".35" />
      <circle cx="39.500" cy="66" r="32" fill="#ef9c2a" />
      <circle cx="39.500" cy="66" r="31" fill="#fdf3b0" />
      <circle cx="39.500" cy="66.500" r="29.500" fill="url(#coin)" />
      <g fill="none" stroke="#51490c" strokeWidth="1.700">
        <path d="M31 58h17v11q-1 6-8.500 8Q32 75 31 69zM31 66h17M39.500 58v19M34 61l3 3M43 70l3 3M33 69l4 4M42 61l4 3" />
        <path d="M36 55l1-6h6l1 6zM36 52h8M40 45v4M33 55h13" />
        <path d="M29 74q-7-3-7-9t5-9M25 70q-6-1-8-6 2-6 7-7M23 52q5-4 9 1M27 61q-4 2-9 0M27 67q-5 4-3 8M26 55q3 2 3 6M20 58q4 0 5 4" />
        <path d="M50 74q7-3 7-9t-5-9M54 70q6-1 8-6-2-6-7-7M56 52q-5-4-9 1M52 61q4 2 9 0M52 67q5 4 3 8M53 55q-3 2-3 6M59 58q-4 0-5 4" />
        <path d="M24 78q4 5 9 2 6 6 13 0 6 3 9-2M33 79q6 3 13 0M34 83q6 3 11 0" />
      </g>
      <g transform="translate(48 346) rotate(-90)">
        <text x="1" y="1.500" fontSize="27" fontWeight="bold" fill="#0b3348" textLength="240" lengthAdjust="spacingAndGlyphs" fontFamily="Open Sans" aria-hidden="true">ОНЛАЙН-ЗАЯВКА</text>
        <text x="0" y="0" fontSize="27" fontWeight="bold" fill="#eef1f3" textLength="240" lengthAdjust="spacingAndGlyphs" fontFamily="Open Sans">ОНЛАЙН-ЗАЯВКА</text>
        <path d="M0 8h240" stroke="#0b3348" strokeWidth="2" /><path d="M0 6h240" stroke="#eef1f3" strokeWidth="2.400" />
      </g>
      <circle cx="15.500" cy="18.800" r="12.300" fill="#c4c4c4" stroke="#8e8e8e" strokeWidth="2" />
      <path d="M9.500 12.800 21.500 24.800M21.500 12.800 9.500 24.800" stroke="#4a4a4a" strokeWidth="2" />
    </svg>
  </div>
);

/* ---------- scrollbars ---------- */

const SbBtn = ({ d, off, className }) => (
  <span className={`flex shrink-0 items-center justify-center border border-[#8f8c88] bg-gradient-to-b from-[#fafafa] to-[#e4e2e0] ${className}`}>
    <svg width="9" height="9" viewBox="0 0 9 9"><path d={d} fill="none" stroke={off ? "#aaa" : "#222"} strokeWidth="1.600" /></svg>
  </span>
);

const VScroll = () => (
  <div className="flex w-[15px] flex-col border-l border-[#9c9995] bg-[#d5d3d1]">
    <SbBtn className="h-[15px] w-full rounded-t-[3px]" d="M1.500 6l3-3 3 3" />
    <div className="mt-[21px] flex h-[98px] flex-col items-center justify-center gap-[2px] border border-[#5177ae] bg-gradient-to-r from-[#a3c1ea] to-[#80a5d9]">
      <i className="h-px w-[5px] bg-[#3f639b]" /><i className="h-px w-[5px] bg-[#3f639b]" /><i className="h-px w-[5px] bg-[#3f639b]" />
    </div>
    <SbBtn className="mt-auto h-[15px] w-full rounded-b-[3px]" d="M1.500 3l3 3 3-3" />
  </div>
);

const HScroll = () => (
  <div className="flex h-4 bg-[#edeceb]">
    <div className="flex h-[15px] w-[1265px] border-y border-[#9c9995] bg-[#d5d3d1]">
      <SbBtn off className="w-[13px] rounded-l-[3px]" d="M6 1.500l-3 3 3 3" />
      <div className="flex w-[1114px] items-center justify-center gap-[2px] border-x border-[#5177ae] bg-gradient-to-b from-[#a3c1ea] to-[#80a5d9]">
        <i className="h-[5px] w-px bg-[#3f639b]" /><i className="h-[5px] w-px bg-[#3f639b]" /><i className="h-[5px] w-px bg-[#3f639b]" />
      </div>
      <SbBtn className="ml-auto w-[15px] rounded-r-[3px]" d="M3 1.500l3 3-3 3" />
    </div>
  </div>
);

/* ---------- bottom bars ---------- */

const StatusBar = () => (
  <div className="flex h-[25px] items-center border-t border-[#cfcdca] bg-[#edeceb] pb-0.5 pl-2">
    <span className="flex-1">Готово</span>
    <svg width="16" height="16" viewBox="0 0 16 16" className="mt-0.5 mr-[10px]"><rect x="1" y="3" width="14" height="12" rx="1" fill="#f6f6f4" stroke="#bdbdb8" /><path d="M3.500 3V1h3v2M9 3V1h3v2M3 8h10v5H3z" fill="#e6e6e3" stroke="#bdbdb8" /></svg>
    <svg width="16" height="16" viewBox="0 0 16 16" className="mt-0.5 mr-1.5"><path d="M4 8q4-6 9-5 2 3-1 5-3 3-7 3z" fill="#5b5b5b" /><path d="M1 6l4 2M2 13l4-3M8 14l1-4M13 11l-3-3M5 3l3 3M15 7l-3-1" stroke="#777" /></svg>
  </div>
);

const TaskBar = () => (
  <div className="flex h-[42px] items-center border-t-2 border-[#4a6287] bg-[#edeceb] pl-px">
    <span className="flex h-[38px] w-[38px] items-center justify-center rounded-[4px] border border-[#999691] bg-gradient-to-b from-[#fafafa] to-[#e8e6e4]">
      <svg width="32" height="29" viewBox="0 0 32 29"><rect x="3" y="3" width="26" height="22" rx="2" fill="#a8c492" stroke="#444" strokeWidth="1.500" /><path d="M10 5h8l4 4v13H10z" fill="#f1f1ef" stroke="#777" /><path d="M17 19l2-4 5-5 2 2-5 5z" fill="#ee8b1d" stroke="#8a4d0a" strokeWidth=".7" /><path d="M1 1h7L1 8zM31 1h-7l7 7zM1 28h7l-7-7zM31 28h-7l7-7z" fill="#5b8bc8" stroke="#204a87" /></svg>
    </span>
    <Firefox s={17} className="ml-[9px]" />
    <svg width="5" height="17" viewBox="0 0 5 17" shapeRendering="crispEdges" className="ml-[454px]"><path d="M.5 0v17M3.500 0v17" stroke="#aaa7a4" strokeDasharray="1 2" /></svg>
    <span className="ml-[3px] flex h-[38px] w-[266px] items-center rounded-[4px] border border-[#8f8c88] bg-gradient-to-b from-[#cdcac7] to-[#c2bfbc] pl-[6px]">
      <Firefox s={18} /><span className="ml-[7px] tracking-[0.02px] whitespace-nowrap">В тюменском ОВД сконч...</span>
    </span>
    <div className="ml-[83px] flex h-[38px] w-[369px] overflow-hidden rounded-[4px] bg-[#a9a5a1] pl-px">
      <span className="flex w-[45px] items-center justify-center border-y border-y-[#4a6da5] border-b-2 bg-[#d3e2f8] outline outline-1 -outline-offset-2 outline-white"><Firefox s={17} /></span>
      <span className="mt-[2px] ml-px flex h-[33px] w-[45px] items-center justify-center border border-black bg-[#edeceb] pl-1">
        <svg width="28" height="18" viewBox="0 0 28 18"><path d="M3 1h9l2 2v13H1V3z" fill="#c9cac6" stroke="#555753" /><path d="M3.500 5h8v4h-8zM3.500 10.500h8v4h-8z" fill="#a9aba5" stroke="#555753" /><path d="M9 10.500h18v4H9z" fill="#fff" stroke="#000" /></svg>
      </span>
      {[0, 1, 2, 3, 4].map((i) => <span key={i} className="w-[46px] border-r border-[#e9e7e5]" />)}
    </div>
    <svg width="31" height="32" viewBox="0 0 31 32" className="ml-[3px]">
      <path d="M2 9h27l-2 21H4z" fill="#3a72bc" stroke="#204a87" /><path d="M6 13h7l-1 15H7z" fill="#5b90d3" opacity=".6" />
      <path d="M1 5h29v5H1z" fill="#5a6a7c" stroke="#33404f" />
      <path d="M3 9l2-6 5 2 4-4 4 3 4-3 3 4 4 1-1 5-5 0-3 2-5-3-4 2z" fill="#f2f2f0" stroke="#b5b5b1" strokeWidth=".8" />
    </svg>
  </div>
);

export default function App() {
  return (
    <div className="relative flex h-[1024px] w-[1280px] flex-col overflow-hidden bg-[#edeceb] font-['DejaVu_Sans',sans-serif] text-[16px] leading-[20px] text-[#111]">
      <TopPanel />
      <TitleBar />
      <MenuBar />
      <NavBar />
      <DevBar />
      <TabBar />
      <div className="flex h-[744px]">
        <main className="relative h-[744px] w-[1265px] overflow-hidden bg-white font-['Liberation_Sans',sans-serif] text-black">
          <SiteHeader />
          <div className="flex">
            <Article />
            <HyundaiAd />
          </div>
          <Banner />
          <svg width="14" height="21" viewBox="0 0 14 21" className="absolute top-[355px] left-[401px]"><path d="M1.500 1v15.500l3.600-3.300 2.600 6 2.600-1.200-2.600-5.700h4.600z" fill="#fff" stroke="#000" strokeWidth="1.200" /></svg>
        </main>
        <VScroll />
      </div>
      <HScroll />
      <StatusBar />
      <TaskBar />
    </div>
  );
}
